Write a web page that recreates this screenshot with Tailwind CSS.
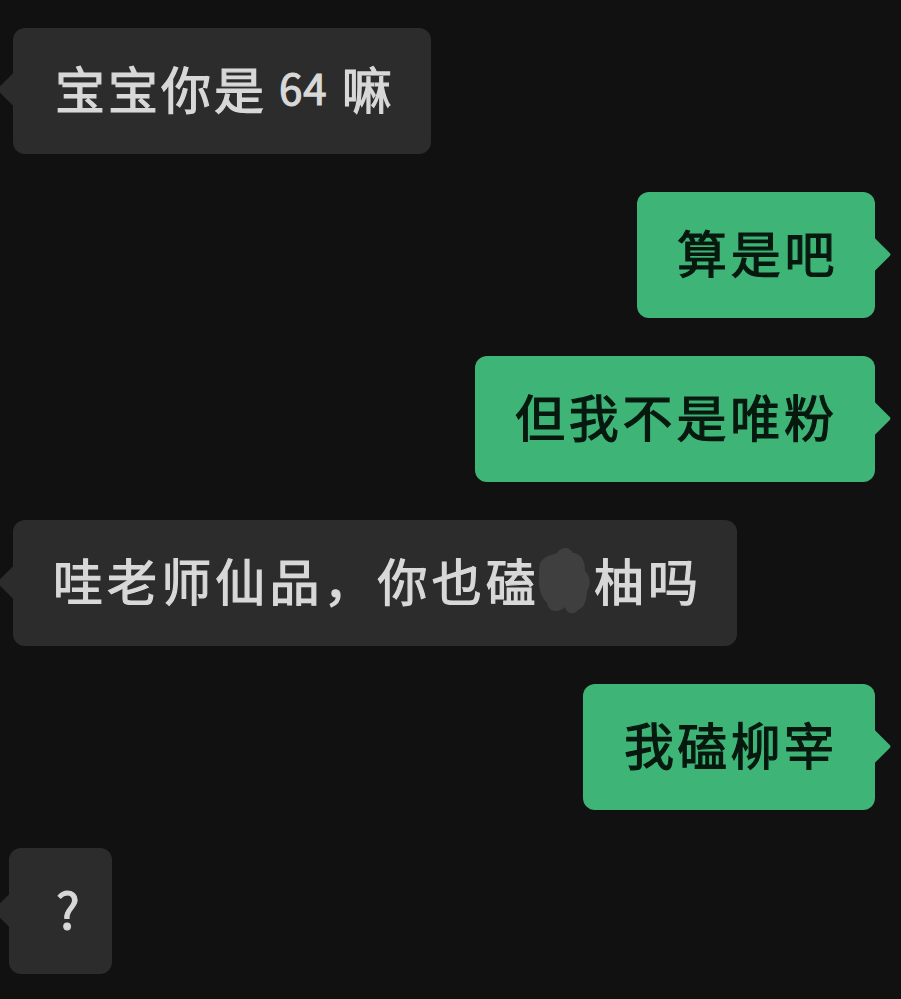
<!DOCTYPE html>
<html lang="zh-CN">
<head>
    <meta charset="UTF-8">
    <meta name="viewport" content="width=device-width, initial-scale=1.0">
    <title>聊天记录</title>
    <script src="https://cdn.jsdelivr.net/npm/@tailwindcss/browser@4"></script>
</head>
<body class="bg-[#111111] h-[999px] overflow-hidden font-['Noto_Sans_CJK_SC','Noto_Sans_CJK_JP',sans-serif]">
    <div class="flex flex-col gap-[38px] pt-[28px] pl-[13px] pr-[26px] text-[50px] leading-[118px] font-normal [-webkit-text-stroke:1.2px]">

        <div class="relative self-start flex h-[126px] w-[418px] pl-[42px] whitespace-nowrap rounded-[12px] bg-[#2c2c2c] text-[#d8d8d8]">
            <span class="absolute left-[-11px] top-[49px] w-[25px] h-[25px] rotate-45 rounded-[2px] bg-[#2c2c2c]"></span>
            <span class="relative tracking-[3px]">宝宝你是</span>
            <span class="relative ml-[12px] text-[42px] tracking-[1px]">64</span>
            <span class="relative ml-[14px]">嘛</span>
        </div>

        <div class="relative self-end h-[126px] w-[238px] pl-[40px] whitespace-nowrap rounded-[12px] bg-[#3eb577] text-[#07190f] tracking-[3.8px]">
            <span class="absolute right-[-11px] top-[50px] w-[25px] h-[25px] rotate-45 rounded-[2px] bg-[#3eb577]"></span>
            <span class="relative">算是吧</span>
        </div>

        <div class="relative self-end h-[126px] w-[400px] pl-[40px] whitespace-nowrap rounded-[12px] bg-[#3eb577] text-[#07190f] tracking-[3.8px]">
            <span class="absolute right-[-11px] top-[50px] w-[25px] h-[25px] rotate-45 rounded-[2px] bg-[#3eb577]"></span>
            <span class="relative">但我不是唯粉</span>
        </div>

        <div class="relative self-start flex h-[126px] w-[724px] pl-[40px] whitespace-nowrap rounded-[12px] bg-[#2c2c2c] text-[#d8d8d8] tracking-[4.1px]">
            <span class="absolute left-[-11px] top-[50px] w-[25px] h-[25px] rotate-45 rounded-[2px] bg-[#2c2c2c]"></span>
            <span class="relative">哇老师仙品，你也磕</span>
            <svg class="relative shrink-0 w-[54px] h-[68px] mt-[27px] ml-[-3px] mr-[3px]" viewBox="0 0 54 68">
                <path d="M3 16 C8 8 16 8 20 6 C24 0 32 -1 36 6 C44 6 48 14 48 24 C54 30 54 38 50 44 C50 54 46 62 42 62 C38 68 30 68 28 60 C22 66 12 66 10 56 C4 50 1 40 2 30 C2 24 2 20 3 16 Z" fill="#3f3f3f"/>
            </svg>
            <span class="relative">柚吗</span>
        </div>

        <div class="relative self-end h-[126px] w-[292px] pl-[41px] whitespace-nowrap rounded-[12px] bg-[#3eb577] text-[#07190f] tracking-[3.3px]">
            <span class="absolute right-[-11px] top-[50px] w-[25px] h-[25px] rotate-45 rounded-[2px] bg-[#3eb577]"></span>
            <span class="relative">我磕柳宰</span>
        </div>

        <div class="relative self-start ml-[-4px] h-[126px] w-[103px] pl-[47px] whitespace-nowrap rounded-[12px] bg-[#2c2c2c] text-[#d8d8d8]">
            <span class="absolute left-[-11px] top-[50px] w-[25px] h-[25px] rotate-45 rounded-[2px] bg-[#2c2c2c]"></span>
            <span class="relative">?</span>
        </div>

    </div>
</body>
</html>
